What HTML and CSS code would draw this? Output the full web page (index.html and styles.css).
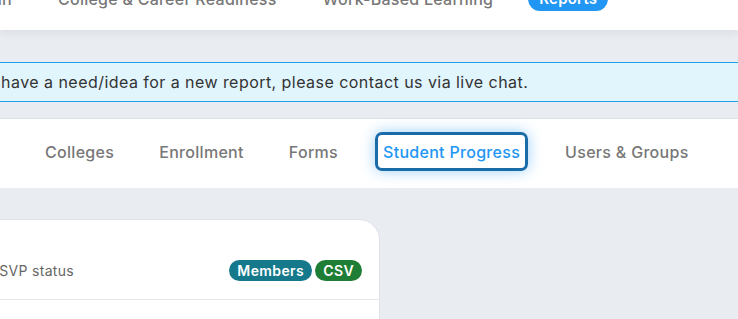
FILE: index.html
```html
<!DOCTYPE html>
<html lang="en">
<head>
<meta charset="utf-8">
<title>Reports</title>
<link rel="stylesheet" href="styles.css">
</head>
<body>
<header class="topbar">
  <nav class="mainnav">
    <a class="navlink navlink--clipped">Admin</a>
    <a class="navlink">College &amp; Career Readiness</a>
    <a class="navlink">Work-Based Learning</a>
    <a class="navpill">Reports</a>
  </nav>
</header>
<main class="content">
  <div class="alert"><span class="alert-text">If you have a need/idea for a new report, please contact us via live chat.</span></div>
  <div class="tabs-card">
    <span class="tab tab--clipped">Events</span>
    <span class="tab">Colleges</span>
    <span class="tab">Enrollment</span>
    <span class="tab">Forms</span>
    <span class="tab tab--active">Student Progress</span>
    <span class="tab">Users &amp; Groups</span>
  </div>
  <section class="card">
    <div class="card-row">
      <span class="row-label">RSVP status</span>
      <div class="badges">
        <span class="badge badge--members">Members</span>
        <span class="badge badge--csv">CSV</span>
      </div>
    </div>
  </section>
</main>
</body>
</html>
```
FILE: styles.css
```css
* { box-sizing: border-box; }
html, body { margin: 0; padding: 0; }
body {
  background: #e9ecf1;
  font-family: "Inter", "Open Sans", sans-serif;
  width: 738px;
  height: 319px;
  overflow: hidden;
}

.topbar {
  position: relative;
  background: #fff;
  height: 52px;
  margin-top: -22px;
  box-shadow: 0 3px 8px rgba(40, 50, 70, 0.07);
}
.mainnav {
  display: flex;
  align-items: center;
  gap: 46px;
  padding-left: 12px;
  height: 42px;
}
.navlink {
  font-size: 16px;
  letter-spacing: 0.25px;
  font-weight: 500;
  color: #777;
  white-space: nowrap;
}
.navlink--clipped {
  width: 0;
  display: flex;
  justify-content: flex-end;
}
.navpill {
  margin-left: -11px;
  height: 24px;
  line-height: 24px;
  padding: 0 11px;
  border-radius: 12px;
  background: #2196f3;
  color: #fff;
  font-size: 15px;
  letter-spacing: 0.2px;
  font-weight: 600;
}

.content { padding-top: 32px; }

.alert {
  display: flex;
  align-items: center;
  height: 40px;
  margin-right: -20px;
  background: #e1f5fd;
  border-top: 1px solid #1ea2ec;
  border-bottom: 1px solid #1ea2ec;
  margin-bottom: 17px;
  font-size: 16px;
  letter-spacing: 0.45px;
  color: #333;
  white-space: nowrap;
}
.alert-text { margin-left: -49px; }

.tabs-card {
  display: flex;
  align-items: center;
  gap: 29px;
  height: 69px;
  padding-bottom: 4px;
  margin-right: -20px;
  background: #fff;
  box-shadow: 0 -1px 0 rgba(40, 50, 70, 0.06);
}
.tab {
  display: flex;
  align-items: center;
  height: 39px;
  padding: 0 5px;
  border: 3px solid transparent;
  border-radius: 7px;
  font-size: 16px;
  letter-spacing: 0.3px;
  font-weight: 500;
  color: #777;
  white-space: nowrap;
}
.tab--clipped {
  width: 0;
  padding: 0;
  border: 0;
  margin-right: 8px;
  justify-content: flex-end;
}
.tab--active {
  color: #2196f3;
  border-color: #1a6ca8;
  box-shadow: 0 0 14px rgba(33, 150, 243, 0.45);
}

.card {
  margin-top: 32px;
  margin-left: -60px;
  width: 439px;
  height: 120px;
  background: #fff;
  border-top-right-radius: 20px;
  box-shadow: 0 0 0 1px rgba(40, 50, 70, 0.05);
}
.card-row {
  display: flex;
  align-items: center;
  justify-content: space-between;
  padding: 40px 17px 18px 50px;
  border-bottom: 1px solid #e4e6ea;
}
.row-label {
  font-size: 14px;
  letter-spacing: 0.3px;
  color: #666;
}
.badges { display: flex; gap: 3px; }
.badge {
  height: 21px;
  line-height: 21px;
  padding: 0 8px;
  border-radius: 11px;
  color: #fff;
  font-size: 14px;
  letter-spacing: 0.4px;
  font-weight: 600;
}
.badge--members { background: #15798b; }
.badge--csv { background: #1f7e35; }
```
